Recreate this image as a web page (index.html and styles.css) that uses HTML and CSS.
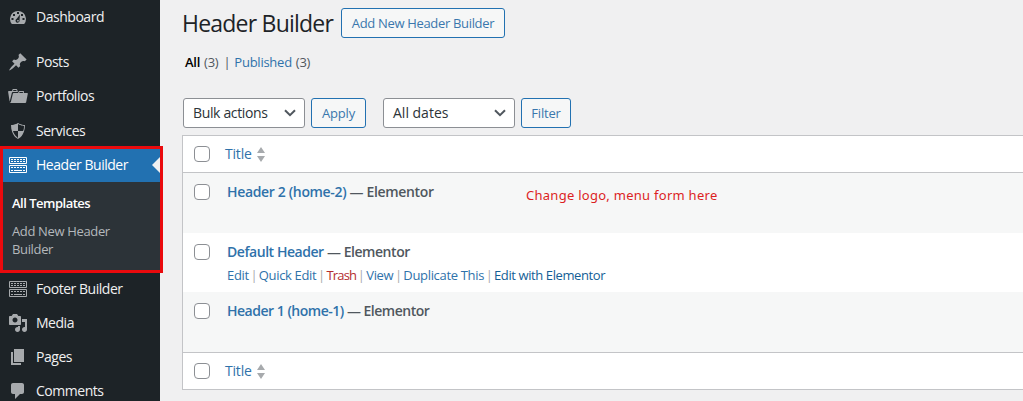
FILE: index.html
```html
<!DOCTYPE html>
<html lang="en">
<head>
<meta charset="utf-8">
<title>Header Builder</title>
<link rel="stylesheet" href="styles.css">
</head>
<body>
<svg class="defs" width="0" height="0">
  <symbol id="keys" viewBox="0 0 20 20">
    <path fill="none" stroke="currentColor" stroke-width="1" d="M1.500 2.500h17v6h-17zM1.500 10.500h17v7h-17z"/>
    <path fill="none" stroke="currentColor" stroke-width="1" stroke-dasharray="2 1" d="M3 4.500h14M3 6.500h14M3 12.500h14"/>
    <path fill="none" stroke="currentColor" stroke-width="1" d="M3 15.500h2M6 15.500h8M15 15.500h2"/>
  </symbol>
  <symbol id="sort" viewBox="0 0 8 15"><path fill="#a7aaad" d="M4 0l4 6H0zM0 9h8l-4 6z"/></symbol>
  <symbol id="chevron" viewBox="0 0 12 8"><path fill="none" stroke="#50575e" stroke-width="2" d="M1 1.200l5 5 5-5"/></symbol>
</svg>
<div class="admin">
  <nav class="menu">
    <a class="item"><svg class="icon" viewBox="0 0 20 20"><path fill-rule="evenodd" d="M3.800 17A8 8 0 1 1 16.200 17zM9 5h2v2H9zM5 7h2v2H5zM13 7h2v2h-2zM3.500 11h2v2h-2zM14.500 11h2v2h-2zM12 7.500l-3.300 4.300a2 2 0 1 0 2.800 1.200zM9.200 13h1.500v1.500H9.200z"/></svg><span>Dashboard</span></a>
    <div class="gap"></div>
    <a class="item"><svg class="icon" viewBox="0 0 20 20"><path d="M10.440 3.020l1.820-1.820 6.360 6.350-1.830 1.820c-1.050-.68-2.480-.57-3.410.36l-.75.75c-.92.93-1.040 2.350-.35 3.410l-1.830 1.820-2.410-2.410-2.800 2.790c-.42.42-3.380 2.710-3.800 2.290s1.860-3.390 2.280-3.810l2.790-2.790L4.100 9.360l1.830-1.820c1.050.69 2.480.57 3.400-.36l.75-.75c.93-.92 1.050-2.350.36-3.410z"/></svg><span>Posts</span></a>
    <a class="item"><svg class="icon" viewBox="0 0 20 20"><path d="M4 5H.78c-.37 0-.74.32-.69.84l1.560 9.990S3.500 8.470 3.860 6.700c.11-.53.61-.7.98-.7H10s-.7-2.080-.77-2.310C9.110 3.250 8.890 3 8.450 3H5.140c-.36 0-.7.23-.8.64C4.250 4.040 4 5 4 5zm4.880 0h-4s.42-1 .87-1h2.130c.48 0 1 1 1 1zM2.670 16.250c-.31.47-.76.75-1.260.75h15.730c.54 0 .92-.31 1.030-.83.44-2.190 1.680-8.440 1.680-8.440.07-.5-.3-.73-.62-.73H16V5.530c0-.16-.26-.53-.66-.53h-3.760c-.52 0-.87.58-.87.58L10 7H5.590c-.32 0-.63.19-.69.5 0 0-1.590 6.700-1.720 7.330-.07.37-.22.99-.51 1.420zM15.380 7H11s.58-1 1.130-1h2.290c.71 0 .96 1 .96 1z"/></svg><span>Portfolios</span></a>
    <a class="item services"><svg class="icon" viewBox="0 0 20 20"><path d="M10 2s3 2 7 2c0 11-7 14-7 14S3 15 3 4c4 0 7-2 7-2zm0 8h5s1-1 1-5c0 0-5-1-6-2v7H5c1 4 5 7 5 7v-7z"/></svg><span>Services</span></a>
    <div class="current">
      <a class="item active"><svg class="icon"><use href="#keys"/></svg><span>Header Builder</span><i class="arrow"></i></a>
      <div class="submenu">
        <a class="sub selected">All Templates</a>
        <a class="sub">Add New Header<br>Builder</a>
      </div>
      <div class="highlight"></div>
    </div>
    <a class="item"><svg class="icon"><use href="#keys"/></svg><span>Footer Builder</span></a>
    <a class="item"><svg class="icon" viewBox="0 0 20 20"><path fill-rule="evenodd" d="M13 11V4c0-.55-.45-1-1-1h-1.670L9 1H5L3.670 3H2c-.55 0-1 .45-1 1v7c0 .55.45 1 1 1h10c.55 0 1-.45 1-1zM7 4.500c1.380 0 2.500 1.120 2.500 2.500S8.380 9.500 7 9.500 4.500 8.380 4.500 7 5.620 4.500 7 4.500zM14 6h5v10.500c0 1.380-1.120 2.500-2.500 2.500S14 17.880 14 16.500s1.120-2.500 2.500-2.500c.17 0 .34.02.5.05V9h-3V6zm-4 8.050V13h2v3.500c0 1.380-1.120 2.500-2.500 2.500S7 17.880 7 16.500 8.120 14 9.500 14c.17 0 .34.02.5.05z"/></svg><span>Media</span></a>
    <a class="item"><svg class="icon" viewBox="0 0 20 20"><path d="M6 15V2h10v13H6zm-1 1h8v2H3V5h2v11z"/></svg><span>Pages</span></a>
    <a class="item"><svg class="icon" viewBox="0 0 20 20"><path d="M5 2h9c1.100 0 2 .9 2 2v7c0 1.100-.9 2-2 2h-2l-5 5v-5H5c-1.100 0-2-.9-2-2V4c0-1.100.9-2 2-2z"/></svg><span>Comments</span></a>
  </nav>
  <main class="content">
    <header class="heading"><h1 class="title">Header Builder</h1><a class="button add">Add New Header Builder</a></header>
    <div class="views"><b>All</b><span class="count">(3)</span><span class="bar">|</span><a>Published</a><span class="count">(3)</span></div>
    <div class="filters">
      <div class="select bulk"><span>Bulk actions</span><svg class="chevron"><use href="#chevron"/></svg></div>
      <a class="button apply">Apply</a>
      <div class="select dates"><span>All dates</span><svg class="chevron"><use href="#chevron"/></svg></div>
      <a class="button filter">Filter</a>
    </div>
    <section class="table">
      <div class="row head"><i class="check"></i><a class="column">Title</a><svg class="sort"><use href="#sort"/></svg></div>
      <div class="row alt">
        <i class="check"></i><div class="cell"><div class="name first"><a>Header 2 (home-2)</a> — Elementor</div></div>
        <span class="note">Change logo, menu form here</span>
      </div>
      <div class="row open">
        <i class="check"></i><div class="cell"><div class="name"><a>Default Header</a> — Elementor</div>
        <div class="actions"><a>Edit</a><s>|</s><a>Quick Edit</a><s>|</s><a class="trash">Trash</a><s>|</s><a>View</a><s>|</s><a>Duplicate This</a><s>|</s><a class="dark">Edit with Elementor</a></div></div>
      </div>
      <div class="row alt"><i class="check"></i><div class="cell"><div class="name third"><a>Header 1 (home-1)</a> — Elementor</div></div></div>
      <div class="row foot"><i class="check"></i><a class="column">Title</a><svg class="sort"><use href="#sort"/></svg></div>
    </section>
  </main>
</div>
</body>
</html>
```
FILE: styles.css
```css
* { box-sizing: border-box; }
body { margin: 0; overflow: hidden; background: #f0f0f1; font: 13px/18px "Segoe UI", "Open Sans", sans-serif; color: #50575e; }
.defs { position: absolute; }
.admin { display: flex; height: 401px; overflow: hidden; }
.menu { flex: none; width: 160px; background: #1d2327; }
.item { display: flex; align-items: center; gap: 8px; height: 34px; padding-left: 8px; color: #f0f0f1; font-size: 14px; letter-spacing: -0.47px; white-space: nowrap; }
.item.services { height: 35px; padding-top: 1px; }
.icon { flex: none; width: 20px; height: 20px; fill: #a7aaad; color: #a7aaad; }
.gap { height: 11px; }
.current { position: relative; height: 124px; background: #2c3338; }
.active { position: relative; background: #2271b1; color: #fff; }
.active .icon { color: #fff; }
.arrow { position: absolute; right: 0; top: 9px; border: 8px solid transparent; border-left: 0; border-right-color: #f0f0f1; }
.submenu { padding: 12px 12px 0; }
.sub { display: block; color: #b4b8bc; font-size: 13px; letter-spacing: -0.35px; white-space: nowrap; }
.selected { margin-bottom: 10px; color: #fff; font-weight: 600; letter-spacing: -0.5px; }
.highlight { position: absolute; left: 0; top: -2px; width: 163px; height: 127px; border: 3px solid #ea0a0d; z-index: 2; }
.content { flex: 1; min-width: 0; padding: 8px 0 0 22px; }
.heading { display: flex; height: 30px; align-items: center; }
.title { width: 159px; margin: 0; color: #1d2327; font-size: 23px; font-weight: 400; line-height: 30px; letter-spacing: -0.78px; white-space: nowrap; }
.button { display: flex; flex: none; align-items: center; justify-content: center; height: 30px; border: 1px solid #2271b1; border-radius: 3px; background: #f6f7f7; color: #3a77ad; letter-spacing: -0.2px; white-space: nowrap; }
.add { width: 164px; letter-spacing: -0.33px; }
a { color: #2f72aa; }
.views { display: flex; height: 18px; margin: 15px 0 0 3px; letter-spacing: -0.25px; }
.views b { color: #000; font-weight: 600; }
.count { margin-left: 4px; }
.bar { margin: 0 4px 0 5px; }
.filters { display: flex; margin: 27px 0 7px 1px; }
.select { display: flex; align-items: center; justify-content: space-between; height: 30px; padding: 0 8px 0 9px; border: 1px solid #8c8f94; border-radius: 3px; background: #fff; color: #2c3338; font-size: 14px; letter-spacing: -0.35px; }
.chevron { width: 12px; height: 8px; }
.bulk { width: 122px; }
.apply { width: 55px; margin-left: 6px; }
.dates { width: 132px; margin-left: 17px; letter-spacing: 0; }
.filter { width: 50px; margin-left: 6px; }
.table { width: 860px; height: 255px; border: 1px solid #c3c4c7; background: #fff; }
.row { position: relative; display: flex; height: 60px; padding-left: 11px; }
.open { height: 59px; }
.head, .foot { height: 37px; align-items: center; font-size: 14px; letter-spacing: -0.2px; }
.head { border-bottom: 1px solid #c3c4c7; }
.foot { border-top: 1px solid #c3c4c7; }
.alt { background: #f6f7f7; }
.check { flex: none; width: 16px; height: 16px; border: 1px solid #8c8f94; border-radius: 4px; background: #fff; }
.alt .check, .open .check { margin-top: 11px; }
.alt .check { margin-top: 11px; }
.column { width: 27px; margin-left: 15px; }
.sort { width: 8px; height: 15px; margin-left: 5px; }
.cell { margin-left: 17px; padding-top: 8px; }
.name { height: 21px; font-size: 14px; line-height: 21px; font-weight: 600; letter-spacing: -0.45px; white-space: nowrap; }
.name.first { letter-spacing: -0.34px; }
.name.third { letter-spacing: -0.49px; }
.actions { display: flex; margin-top: 4px; letter-spacing: -0.33px; white-space: nowrap; }
.actions s { flex: none; width: 10px; color: #a7aaad; text-align: center; text-decoration: none; }
.actions .trash { color: #b32d2e; letter-spacing: -0.8px; }
.actions .dark { color: #135e96; letter-spacing: -0.4px; }
.note { position: absolute; left: 343px; top: 13px; color: #dc1f1f; font-family: "Noto Sans", sans-serif; font-size: 13px; letter-spacing: 0.27px; white-space: nowrap; }
```
